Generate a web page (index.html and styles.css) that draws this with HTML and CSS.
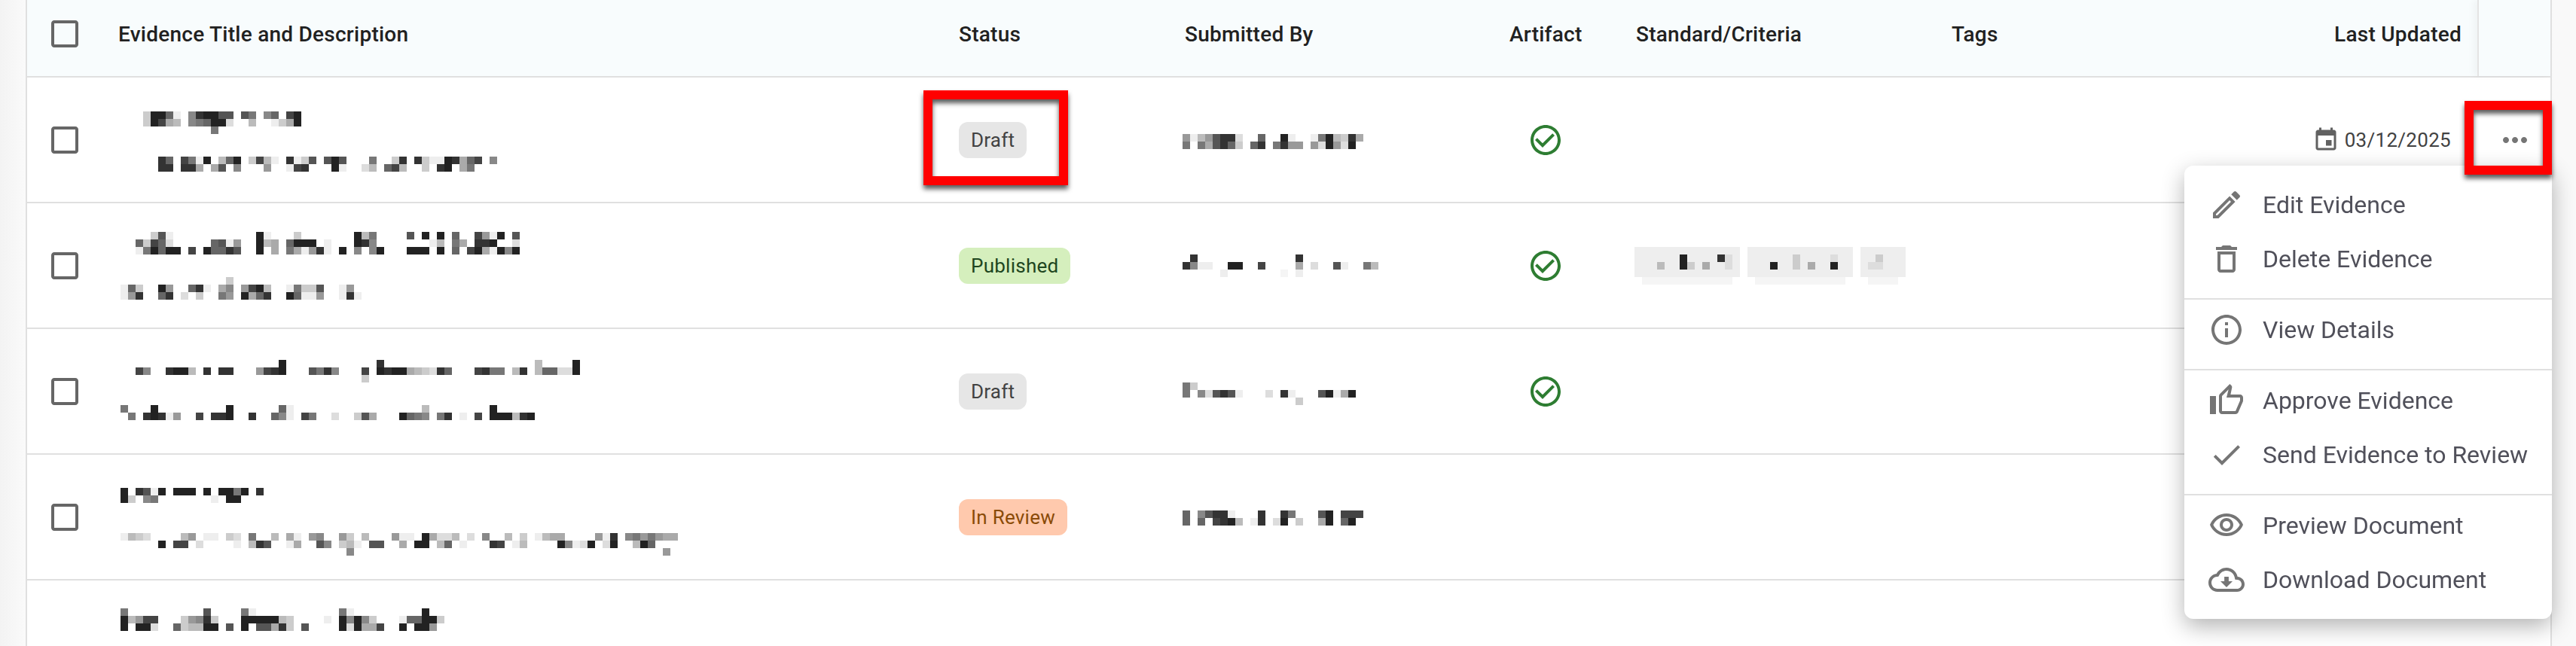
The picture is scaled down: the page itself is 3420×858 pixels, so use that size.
FILE: index.html
```html
<!DOCTYPE html>
<html lang="en">
<head>
    <meta charset="UTF-8">
    <title>Evidence</title>
    <link rel="stylesheet" href="styles.css">
</head>
<body>
    <div class="page">
        <div class="table">
            <!-- Header -->
            <div class="table-row table-head">
                <div class="cell-select"><svg class="icon-checkbox" viewBox="0 0 24 24"><path d="M19 5v14H5V5h14m0-2H5c-1.1 0-2 .9-2 2v14c0 1.1.9 2 2 2h14c1.1 0 2-.9 2-2V5c0-1.1-.9-2-2-2z"/></svg></div>
                <div>Evidence Title and Description</div>
                <div>Status</div>
                <div>Submitted By</div>
                <div>Artifact</div>
                <div>Standard/Criteria</div>
                <div>Tags</div>
                <div class="cell-updated">Last Updated</div>
                <div class="cell-actions-head"></div>
            </div>

            <!-- Row 1 -->
            <div class="table-row row-one">
                <div class="cell-select"><svg class="icon-checkbox" viewBox="0 0 24 24"><path d="M19 5v14H5V5h14m0-2H5c-1.1 0-2 .9-2 2v14c0 1.1.9 2 2 2h14c1.1 0 2-.9 2-2V5c0-1.1-.9-2-2-2z"/></svg></div>
                <div class="cell-title">
                    <div class="mosaic-line"><canvas class="mosaic" data-rows="fffc226ef832255f57f86f42|fffc24abf87622dffbffeca2|ffffffffffff7"></canvas></div>
                    <div class="mosaic-line"><canvas class="mosaic" data-rows="fffff36f47e2fb62fc4bef3ec5f525fff7ffc3f3cee23a64f8|fffff33f33afa5f8fff9ffe43fff2effdbf64bffcf32fa7fff"></canvas></div>
                </div>
                <div class="cell-status"><span class="chip chip-draft">Draft</span></div>
                <div class="cell-person"><canvas class="mosaic" data-rows="9eb9533dff6ff2effe72bc3a|7f7a536cf63f7399f9d29d2f"></canvas></div>
                <div class="cell-artifact"><svg class="icon-artifact" viewBox="0 0 24 24"><path d="M16.59 7.58 10 14.17l-3.59-3.58L5 12l5 5 8-8zM12 2C6.48 2 2 6.48 2 12s4.48 10 10 10 10-4.48 10-10S17.52 2 12 2zm0 18c-4.42 0-8-3.58-8-8s3.58-8 8-8 8 3.58 8 8-3.58 8-8 8z"/></svg></div>
                <div></div>
                <div></div>
                <div class="cell-updated cell-date"><svg class="icon-date" viewBox="0 0 24 24"><path d="M17 12h-5v5h5v-5zM16 1v2H8V1H6v2H5c-1.11 0-1.99.9-1.99 2L3 19c0 1.1.89 2 2 2h14c1.1 0 2-.9 2-2V5c0-1.1-.9-2-2-2h-1V1h-2zm3 18H5V8h14v11z"/></svg>03/12/2025</div>
                <div class="cell-actions"><svg class="icon-more" viewBox="0 0 24 24"><path d="M6 10c-1.1 0-2 .9-2 2s.9 2 2 2 2-.9 2-2-.9-2-2-2zm12 0c-1.1 0-2 .9-2 2s.9 2 2 2 2-.9 2-2-.9-2-2-2zm-6 0c-1.1 0-2 .9-2 2s.9 2 2 2 2-.9 2-2-.9-2-2-2z"/></svg></div>
            </div>

            <!-- Row 2 -->
            <div class="table-row row-two">
                <div class="cell-select"><svg class="icon-checkbox" viewBox="0 0 24 24"><path d="M19 5v14H5V5h14m0-2H5c-1.1 0-2 .9-2 2v14c0 1.1.9 2 2 2h14c1.1 0 2-.9 2-2V5c0-1.1-.9-2-2-2z"/></svg></div>
                <div class="cell-title">
                    <div class="mosaic-line"><canvas class="mosaic" data-rows="ffffc5efffffffffff2efffcfffffff2b7ffff5f2f2f6ff49e2f5|ff6c46dfffff65e9ff2baf6222fefff238fffffffebf7af332ffd|ffe72622f4f26635ff2faf7ae93ef2f8f82fff222f2f6f42ae282"></canvas></div>
                    <div class="mosaic-line"><canvas class="mosaic" data-rows="ffffffffffffffc|e6cff29ff63efa8f942bffe7cc5ffe9|e93ff63fdfcff79f2a63ff26ee9ffe3e"></canvas></div>
                </div>
                <div class="cell-status"><span class="chip chip-published">Published</span></div>
                <div class="cell-person"><canvas class="mosaic" data-rows="f3fffffffffffff3|38eeff22ff4ffffafdff5eff7b|fffffefffffffgfe"></canvas></div>
                <div class="cell-artifact"><svg class="icon-artifact" viewBox="0 0 24 24"><path d="M16.59 7.58 10 14.17l-3.59-3.58L5 12l5 5 8-8zM12 2C6.48 2 2 6.48 2 12s4.48 10 10 10 10-4.48 10-10S17.52 2 12 2zm0 18c-4.42 0-8-3.58-8-8s3.58-8 8-8 8 3.58 8 8-3.58 8-8 8z"/></svg></div>
                <div class="cell-tags"><canvas class="mosaic" data-rows="eeeeeeeeeeeeeefeeeeeeeeeeeeeefeeeeee|eeeeee2eeee3defeeeeeeceeeedeefeeceee|eeebee2ceaeedefeee2eeceaee2eefeddeee|eeeeeeeeeeeeeefeeeeeeeeeeeeeefeeeeee|fggggggggggggfffggggggggggggfffggggf"></canvas></div>
                <div></div>
                <div></div>
                <div></div>
            </div>

            <!-- Row 3 -->
            <div class="table-row row-three">
                <div class="cell-select"><svg class="icon-checkbox" viewBox="0 0 24 24"><path d="M19 5v14H5V5h14m0-2H5c-1.1 0-2 .9-2 2v14c0 1.1.9 2 2 2h14c1.1 0 2-.9 2-2V5c0-1.1-.9-2-2-2z"/></svg></div>
                <div class="cell-title">
                    <div class="mosaic-line"><canvas class="mosaic" data-rows="fffffffffffffffffffff2ffffffffffff3ffffffffffffffffffffbffff2|ff48ff322bf3f33fff9432fff5738fff4f2322abcd36fff4377fb3fb66dd2|ffffffffffffffffffffffffffffffffc"></canvas></div>
                    <div class="mosaic-line"><canvas class="mosaic" data-rows="7fff2fffffffff2ffffff6efffffffffffffffffbffffffff2|f7f323e9ff4f332ff3ff68ef47ffdffc5afff2678f73fef4f222b32"></canvas></div>
                </div>
                <div class="cell-status"><span class="chip chip-draft">Draft</span></div>
                <div class="cell-person"><canvas class="mosaic" data-rows="7c|7f8d535efffdf3efff52ea2|fffffffffffffffc"></canvas></div>
                <div class="cell-artifact"><svg class="icon-artifact" viewBox="0 0 24 24"><path d="M16.59 7.58 10 14.17l-3.59-3.58L5 12l5 5 8-8zM12 2C6.48 2 2 6.48 2 12s4.48 10 10 10 10-4.48 10-10S17.52 2 12 2zm0 18c-4.42 0-8-3.58-8-8s3.58-8 8-8 8 3.58 8 8-3.58 8-8 8z"/></svg></div>
                <div></div>
                <div></div>
                <div></div>
                <div></div>
            </div>

            <!-- Row 4 -->
            <div class="table-row row-four">
                <div class="cell-select"><svg class="icon-checkbox" viewBox="0 0 24 24"><path d="M19 5v14H5V5h14m0-2H5c-1.1 0-2 .9-2 2v14c0 1.1.9 2 2 2h14c1.1 0 2-.9 2-2V5c0-1.1-.9-2-2-2z"/></svg></div>
                <div class="cell-title">
                    <div class="mosaic-line"><canvas class="mosaic" data-rows="2f35e2f222f2f2272f3|2cf87fffffffef22f"></canvas></div>
                    <div class="mosaic-line"><canvas class="mosaic" data-rows="ebcdffffb9feefcdf7ffbfaef98ff9cfbfff9eef2addbfdf8ffbfcfebaaffff9e3f87979aa|fffff2f44fdffffefb35ffeaff58fcbef55ffaf22fb6fefff34febffff28ed2fd2ffb26|ffffffffffffffffffffffffffffff8fffffffffffffffffffffffffffffffffffffffff9"></canvas></div>
                </div>
                <div class="cell-status"><span class="chip chip-review">In Review</span></div>
                <div class="cell-person"><canvas class="mosaic" data-rows="6f8533efff3ff37fff52f444|6f6f432bfe3fd2fcffa2f62"></canvas></div>
                <div></div>
                <div></div>
                <div></div>
                <div></div>
                <div></div>
            </div>

            <!-- Row 5 -->
            <div class="table-row row-five">
                <div class="cell-select"></div>
                <div class="cell-title">
                    <div class="mosaic-line"><canvas class="mosaic" data-rows="7ffffffffff5ffff7efffffffffff7efffffffff2|2b944fffc983cfff22222bcffffef2828cfffe6622c|2f22dff6cbb22f5f2f55a3cf5ffff2d2aa4ff2f229"></canvas></div>
                </div>
                <div></div>
                <div></div>
                <div></div>
                <div></div>
                <div></div>
                <div></div>
                <div></div>
            </div>
        </div>

        <!-- Row action menu -->
        <div class="menu">
            <div class="menu-group">
                <div class="menu-item"><svg viewBox="0 0 24 24"><path d="M3 17.25V21h3.75L17.81 9.94l-3.75-3.75L3 17.25zM5.92 19H5v-.92l9.06-9.06.92.92L5.92 19zM20.71 7.04c.39-.39.39-1.02 0-1.41l-2.34-2.34c-.2-.2-.45-.29-.71-.29s-.51.1-.7.29l-1.83 1.83 3.75 3.75 1.83-1.83z"/></svg>Edit Evidence</div>
                <div class="menu-item"><svg viewBox="0 0 24 24"><path d="M16 9v10H8V9h8m-1.5-6h-5l-1 1H5v2h14V4h-3.5l-1-1zM18 7H6v12c0 1.1.9 2 2 2h8c1.1 0 2-.9 2-2V7z"/></svg>Delete Evidence</div>
            </div>
            <div class="menu-group">
                <div class="menu-item"><svg viewBox="0 0 24 24"><path d="M11 7h2v2h-2zm0 4h2v6h-2zm1-9C6.48 2 2 6.48 2 12s4.48 10 10 10 10-4.48 10-10S17.52 2 12 2zm0 18c-4.41 0-8-3.59-8-8s3.59-8 8-8 8 3.59 8 8-3.59 8-8 8z"/></svg>View Details</div>
            </div>
            <div class="menu-group">
                <div class="menu-item"><svg viewBox="0 0 24 24"><path d="M9 21h9c.83 0 1.54-.5 1.84-1.22l3.02-7.05c.09-.23.14-.47.14-.73v-2c0-1.1-.9-2-2-2h-6.31l.95-4.57.03-.32c0-.41-.17-.79-.44-1.06L14.17 1 7.58 7.59C7.22 7.95 7 8.45 7 9v10c0 1.1.9 2 2 2zM9 9l4.34-4.34L12 10h9v2l-3 7H9V9zM1 9h4v12H1z"/></svg>Approve Evidence</div>
                <div class="menu-item"><svg viewBox="0 0 24 24"><path d="M9 16.17L4.83 12l-1.42 1.41L9 19 21 7l-1.41-1.41z"/></svg>Send Evidence to Review</div>
            </div>
            <div class="menu-group">
                <div class="menu-item"><svg viewBox="0 0 24 24"><path d="M12 6c3.79 0 7.17 2.13 8.82 5.5C19.17 14.87 15.79 17 12 17s-7.17-2.13-8.82-5.5C4.83 8.13 8.21 6 12 6m0-2C7 4 2.73 7.11 1 11.5 2.73 15.89 7 19 12 19s9.27-3.11 11-7.5C21.27 7.11 17 4 12 4zm0 5c1.38 0 2.5 1.12 2.5 2.5S13.38 14 12 14s-2.5-1.12-2.5-2.5S10.62 9 12 9m0-2c-2.48 0-4.5 2.02-4.5 4.5S9.52 16 12 16s4.5-2.02 4.5-4.5S14.48 7 12 7z"/></svg>Preview Document</div>
                <div class="menu-item"><svg viewBox="0 0 24 24"><path d="M19.35 10.04C18.67 6.59 15.64 4 12 4 9.11 4 6.6 5.64 5.35 8.04 2.34 8.36 0 10.91 0 14c0 3.31 2.69 6 6 6h13c2.76 0 5-2.24 5-5 0-2.64-2.05-4.78-4.65-4.96zM19 18H6c-2.21 0-4-1.79-4-4 0-2.05 1.53-3.76 3.56-3.97l1.07-.11.5-.95C8.08 7.14 9.94 6 12 6c2.62 0 4.88 1.86 5.39 4.43l.3 1.5 1.53.11c1.56.1 2.78 1.41 2.78 2.96 0 1.65-1.35 3-3 3zm-5.55-8h-2.9v3H8l4 4 4-4h-2.55z"/></svg>Download Document</div>
            </div>
        </div>

        <!-- Annotation boxes -->
        <div class="callout callout-status"></div>
        <div class="callout callout-actions"></div>
    </div>

    <script src="script.js"></script>
</body>
</html>
```

FILE: styles.css
```css
/* General Styling */
html, body {
    margin: 0;
    padding: 0;
}

body {
    font-family: 'Roboto', sans-serif;
    color: #212121;
}

.page {
    position: relative;
    height: 858px;
    overflow: hidden;
    background: linear-gradient(90deg, #f3f3f3, #fafafa 34px, #f9f9f9);
}

/* Table */
.table {
    margin-left: 34px;
    width: 3354px;
    height: 858px;
    background: #ffffff;
    border-left: 2px solid #e0e0e0;
    border-right: 2px solid #e0e0e0;
    box-sizing: border-box;
}

.table-row {
    display: grid;
    grid-template-columns: 121px 1116px 300px 431px 168px 419px 309px 389px 97px;
    height: 167px;
    box-sizing: border-box;
    border-bottom: 2px solid #e0e0e0;
    font-size: 26px;
}

.table-head {
    height: 103px;
    background: #f8fcfd;
    font-size: 28px;
    font-weight: 500;
    letter-spacing: 0.25px;
    align-items: center;
    padding-bottom: 11px;
}

.table-head .cell-actions-head {
    align-self: stretch;
    margin-bottom: -11px;
    border-left: 2px solid #e4e4e4;
    box-shadow: -6px 0 8px rgba(0, 0, 0, 0.03);
}

/* Each row sets where its pixelated text starts */
.row-one { --mosaic-top: 45px; }
.row-two { --mosaic-top: 38px; }
.row-three { --mosaic-top: 41px; }
.row-four { --mosaic-top: 44px; }
.row-five { --mosaic-top: 37px; border-bottom: none; }

.cell-select {
    display: flex;
    align-items: center;
    padding-left: 26px;
}

.icon-checkbox {
    width: 48px;
    height: 48px;
    fill: #666666;
}

.cell-title {
    padding: var(--mosaic-top) 0 0 3px;
}

.mosaic-line {
    height: 60px;
}

.mosaic {
    display: block;
    image-rendering: pixelated;
}

.cell-person {
    padding-top: calc(var(--mosaic-top) + 30px);
    margin-left: -3px;
}

.cell-tags {
    padding-top: calc(var(--mosaic-top) + 20px);
    margin-left: -2px;
}

/* Status chips */
.cell-status {
    display: flex;
    align-items: center;
}

.chip {
    display: block;
    height: 48px;
    line-height: 48px;
    padding: 0 16px;
    border-radius: 12px;
    font-size: 26px;
    letter-spacing: 0.25px;
}

.chip-draft {
    background: #e6e6e6;
    color: #424242;
}

.chip-published {
    background: #d5efbd;
    color: #1e4620;
}

.chip-review {
    background: #ffc9ad;
    color: #8a4b08;
}

.cell-artifact {
    display: flex;
    align-items: center;
    padding-left: 24px;
}

.icon-artifact {
    width: 48px;
    height: 48px;
    fill: #2e7d32;
}

.cell-updated {
    padding-right: 21px;
    text-align: right;
}

.cell-date {
    display: flex;
    align-items: center;
    justify-content: flex-end;
    gap: 7px;
    padding-right: 35px;
    color: #424242;
    letter-spacing: 0.3px;
}

.icon-date {
    width: 36px;
    height: 36px;
    fill: #616161;
}

.cell-actions {
    display: flex;
    align-items: center;
    padding-left: 26px;
}

.icon-more {
    width: 48px;
    height: 48px;
    fill: #757575;
}

/* Row action menu */
.menu {
    position: absolute;
    left: 2900px;
    top: 220px;
    width: 488px;
    background: #ffffff;
    border-radius: 12px;
    box-shadow: 0 10px 30px rgba(0, 0, 0, 0.3);
    padding-top: 16px;
}

.menu-group {
    padding: 4px 0 16px;
    border-bottom: 2px solid #e0e0e0;
}

.menu-group:first-child {
    padding-top: 0;
}

.menu-group:last-child {
    border-bottom: none;
}

.menu-item {
    display: flex;
    align-items: center;
    gap: 24px;
    height: 72px;
    padding-left: 32px;
    font-size: 32px;
    color: #50505a;
}

.menu-item svg {
    width: 48px;
    height: 48px;
    fill: #757575;
}

/* Annotation boxes */
.callout {
    position: absolute;
    box-sizing: border-box;
    border: 12px solid #ff0000;
    filter: drop-shadow(0 5px 3px rgba(0, 0, 0, 0.65));
}

.callout-status {
    left: 1226px;
    top: 120px;
    width: 192px;
    height: 126px;
}

.callout-actions {
    left: 3272px;
    top: 134px;
    width: 116px;
    height: 98px;
}
```

FILE: script.js
```js
// Draws the pixelated (redacted) text blocks from their data-rows strings.
// One hex digit per block: 0 is black, f is white, g is a very light grey.
const BLOCK_SIZE = 10;

function drawMosaic(canvas) {
    const rows = canvas.dataset.rows.split('|');
    const cols = Math.max(...rows.map(row => row.length));

    canvas.width = cols;
    canvas.height = rows.length;
    canvas.style.width = cols * BLOCK_SIZE + 'px';
    canvas.style.height = rows.length * BLOCK_SIZE + 'px';

    const ctx = canvas.getContext('2d');
    rows.forEach((row, y) => {
        [...row].forEach((digit, x) => {
            if (digit === 'f') return;
            const level = digit === 'g' ? 245 : parseInt(digit, 16) * 17;
            ctx.fillStyle = `rgb(${level}, ${level}, ${level})`;
            ctx.fillRect(x, y, 1, 1);
        });
    });
}

document.querySelectorAll('.mosaic').forEach(drawMosaic);
```
